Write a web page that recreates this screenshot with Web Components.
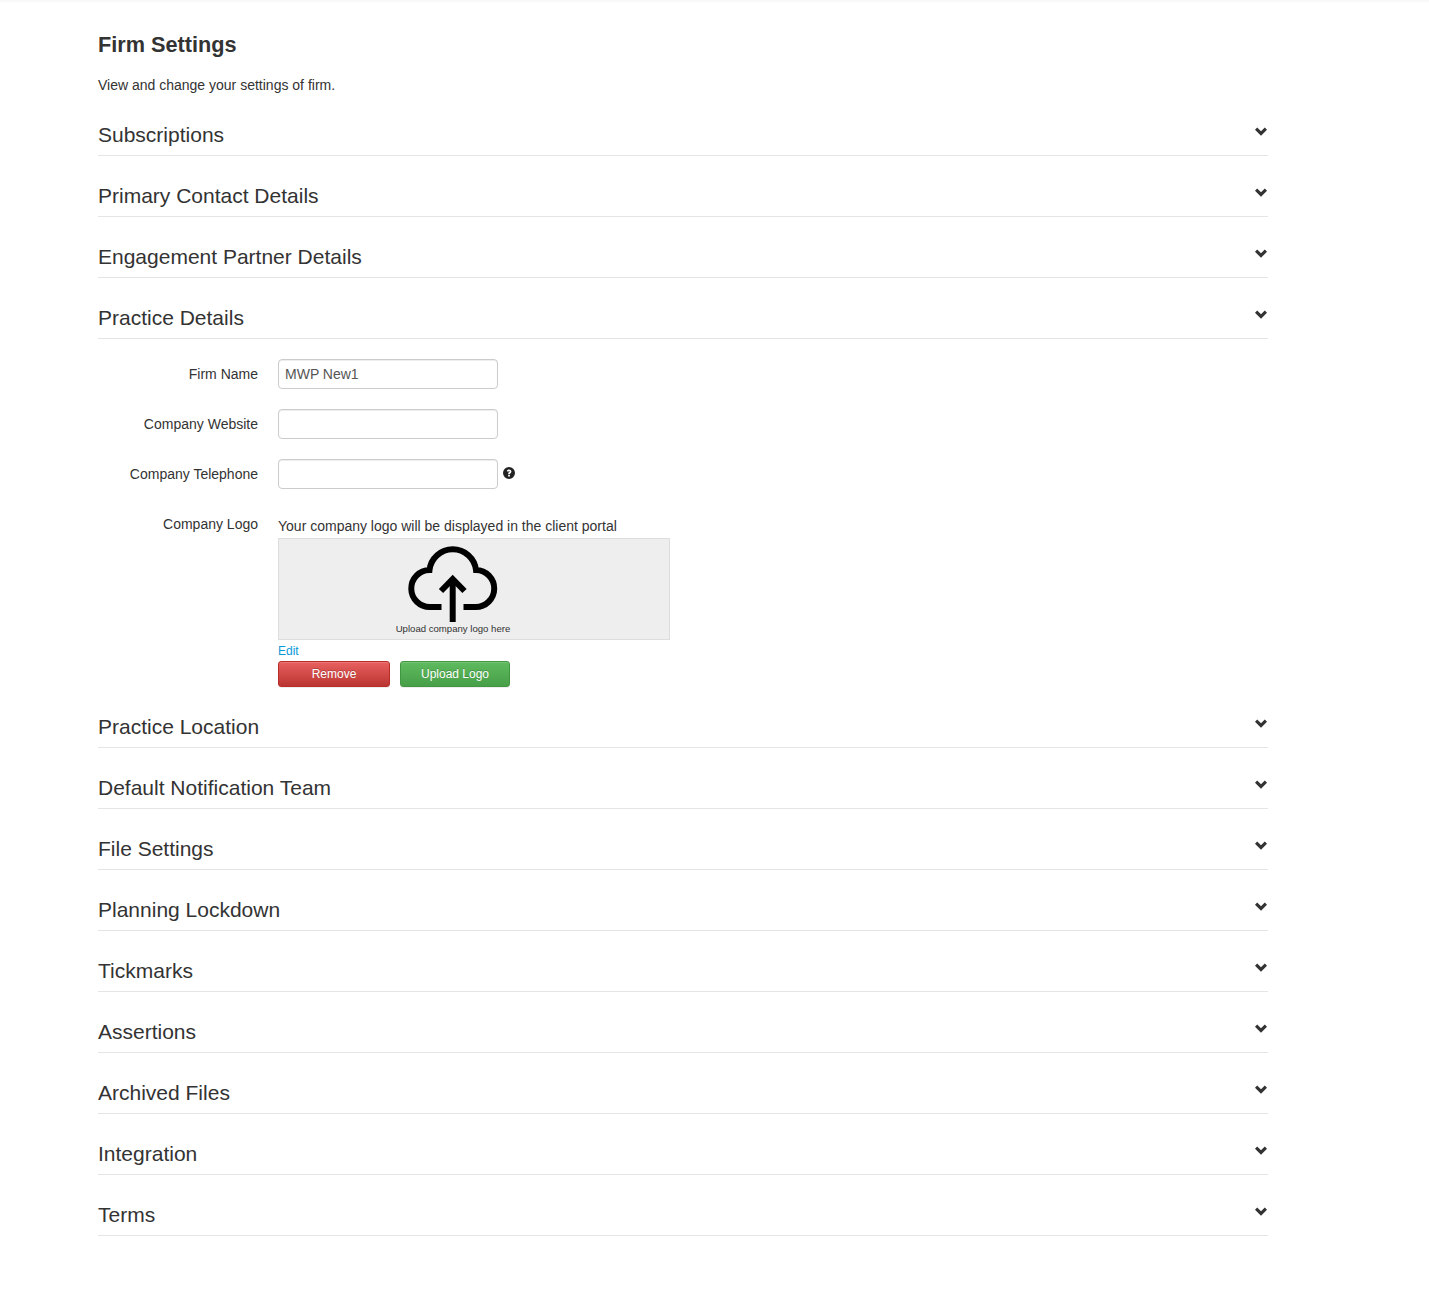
<!DOCTYPE html>
<html lang="en">
<head>
<meta charset="utf-8">
<title>Firm Settings</title>
<style>
    html, body {
        margin: 0;
        background: #fff;
        color: #333;
        font-family: "Liberation Sans", Arial, sans-serif;
    }
</style>
</head>
<body>

<firm-settings-page heading="Firm Settings" intro="View and change your settings of firm.">
    <settings-section label="Subscriptions"></settings-section>
    <settings-section label="Primary Contact Details"></settings-section>
    <settings-section label="Engagement Partner Details"></settings-section>
    <settings-section label="Practice Details">
        <form-row label="Firm Name"><text-field value="MWP New1"></text-field></form-row>
        <form-row label="Company Website"><text-field></text-field></form-row>
        <form-row label="Company Telephone"><text-field help></text-field></form-row>
        <form-row label="Company Logo" logo><logo-upload></logo-upload></form-row>
    </settings-section>
    <settings-section label="Practice Location"></settings-section>
    <settings-section label="Default Notification Team"></settings-section>
    <settings-section label="File Settings"></settings-section>
    <settings-section label="Planning Lockdown"></settings-section>
    <settings-section label="Tickmarks"></settings-section>
    <settings-section label="Assertions"></settings-section>
    <settings-section label="Archived Files"></settings-section>
    <settings-section label="Integration"></settings-section>
    <settings-section label="Terms"></settings-section>
</firm-settings-page>

<script>
const pageTemplate = document.createElement('template');
pageTemplate.innerHTML = `
    <style>
        :host {
            display: block;
            height: 1304px;
            box-sizing: border-box;
            padding: 34px 0 0 98px;
            background: linear-gradient(#f6f6f6, #fff 3px);
        }
        .wrap { width: 1170px; }
        h3 {
            margin: 0 0 19px;
            font-size: 21.7px;
            line-height: 22px;
            font-weight: bold;
            color: #333;
        }
        p {
            margin: 0;
            font-size: 14px;
            line-height: 20px;
        }
    </style>
    <div class="wrap">
        <h3></h3>
        <p></p>
        <slot></slot>
    </div>
`;

class FirmSettingsPage extends HTMLElement {
    constructor() {
        super();
        const root = this.attachShadow({mode: 'open'});
        root.appendChild(pageTemplate.content.cloneNode(true));
        root.querySelector('h3').textContent = this.getAttribute('heading');
        root.querySelector('p').textContent = this.getAttribute('intro');
    }
}

const sectionTemplate = document.createElement('template');
sectionTemplate.innerHTML = `
    <style>
        :host { display: block; }
        .head {
            display: flex;
            justify-content: space-between;
            align-items: flex-start;
            height: 31px;
            padding: 29px 1.5px 0 0;
            border-bottom: 1px solid #e5e5e5;
            font-size: 21px;
            line-height: 22px;
            color: #333;
        }
        svg { display: block; margin-top: 3px; fill: #333; }
        .body { display: none; padding-top: 20px; }
        .body.open { display: flex; flex-direction: column; gap: 20px; }
    </style>
    <div class="head">
        <span class="label"></span>
        <svg width="12" height="9" viewBox="0 0 12 9"><polygon points="0,2.700 2.200,.5 6,4.200 9.800,.5 12,2.700 6,8.800"/></svg>
    </div>
    <div class="body"><slot></slot></div>
`;

class SettingsSection extends HTMLElement {
    constructor() {
        super();
        const root = this.attachShadow({mode: 'open'});
        root.appendChild(sectionTemplate.content.cloneNode(true));
        root.querySelector('.label').textContent = this.getAttribute('label');
        if (this.children.length) root.querySelector('.body').classList.add('open');
    }
}

const rowTemplate = document.createElement('template');
rowTemplate.innerHTML = `
    <style>
        :host {
            display: grid;
            grid-template-columns: 160px 1fr;
            column-gap: 20px;
            font-size: 14px;
            line-height: 20px;
        }
        label { text-align: right; padding-top: 5px; color: #333; }
    </style>
    <label></label>
    <div><slot></slot></div>
`;

class FormRow extends HTMLElement {
    constructor() {
        super();
        const root = this.attachShadow({mode: 'open'});
        root.appendChild(rowTemplate.content.cloneNode(true));
        root.querySelector('label').textContent = this.getAttribute('label');
    }
}

const fieldTemplate = document.createElement('template');
fieldTemplate.innerHTML = `
    <style>
        :host { display: flex; align-items: flex-start; gap: 5px; }
        input {
            width: 220px;
            height: 30px;
            box-sizing: border-box;
            margin: 0;
            padding: 0 6px;
            border: 1px solid #ccc;
            border-radius: 4px;
            box-shadow: inset 0 1px 1px rgba(0,0,0,0.075);
            font: 14px "Liberation Sans", Arial, sans-serif;
            color: #555;
            outline: none;
        }
        svg { display: none; margin-top: 8px; fill: #222; }
        :host([help]) svg { display: block; }
    </style>
    <input type="text">
    <svg width="12" height="12" viewBox="0 0 12 12">
        <path fill-rule="evenodd" d="M6 0a6 6 0 1 1 0 12A6 6 0 0 1 6 0zM5.100 8v1.600h1.800V8zM6 2.500C4.800 2.500 4 3.100 3.800 4.300l1.500.4c.1-.6.300-.8.700-.8s.6.2.6.5c0 .3-.2.500-.6.800C5.400 5.700 5.100 6.100 5.100 7.300h1.800c0-.6.200-.8.600-1.100.500-.4.900-.9.900-1.700 0-1.300-1-2-2.400-2z"/>
    </svg>
`;

class TextField extends HTMLElement {
    constructor() {
        super();
        const root = this.attachShadow({mode: 'open'});
        root.appendChild(fieldTemplate.content.cloneNode(true));
        root.querySelector('input').value = this.getAttribute('value') || '';
    }
}

const logoTemplate = document.createElement('template');
logoTemplate.innerHTML = `
    <style>
        :host { display: block; padding-top: 7px; font-size: 14px; }
        .hint { line-height: 20px; height: 22px; margin-top: 0; color: #333; }
        .box {
            width: 392px;
            height: 102px;
            box-sizing: border-box;
            padding: 6px 0 0 109px;
            border: 1px solid #ddd;
            background: #eee;
        }
        .art {
            display: flex;
            flex-direction: column;
            align-items: center;
            width: 130px;
        }
        svg { display: block; }
        .caption {
            font-size: 9.6px;
            line-height: 10px;
            margin-top: 1px;
            color: #333;
            white-space: nowrap;
        }
        a {
            display: block;
            color: #0a9ad8;
            font-size: 12px;
            line-height: 14px;
            margin-top: 4px;
            text-decoration: none;
        }
        .actions { display: flex; gap: 10px; margin-top: 3px; }
    </style>
    <div class="hint">Your company logo will be displayed in the client portal</div>
    <div class="box">
        <div class="art">
            <svg width="96" height="78" viewBox="405 545 96 78" fill="none" stroke="#000" stroke-width="6">
                <path d="M441.500 607H430A18.500 18.500 0 0 1 429.500 570A23.400 23.400 0 0 1 476 570A18.500 18.500 0 0 1 475.500 607H463.500"/>
                <path d="M441 591L452.700 579L464.500 591"/>
                <path d="M452.700 580V622"/>
            </svg>
            <span class="caption">Upload company logo here</span>
        </div>
    </div>
    <a href="#">Edit</a>
    <div class="actions">
        <app-button kind="danger" style="width:112px">Remove</app-button>
        <app-button kind="success" style="width:110px">Upload Logo</app-button>
    </div>
`;

class LogoUpload extends HTMLElement {
    constructor() {
        super();
        this.attachShadow({mode: 'open'}).appendChild(logoTemplate.content.cloneNode(true));
    }
}

const buttonTemplate = document.createElement('template');
buttonTemplate.innerHTML = `
    <style>
        :host { display: block; }
        button {
            display: block;
            width: 100%;
            height: 26px;
            margin: 0;
            padding: 0;
            border-radius: 3px;
            border: 1px solid;
            color: #fff;
            font: 12px "Liberation Sans", Arial, sans-serif;
            text-shadow: 0 -1px 0 rgba(0,0,0,0.2);
            box-shadow: inset 0 1px 0 rgba(255,255,255,0.15), 0 1px 1px rgba(0,0,0,0.075);
        }
        :host([kind=danger]) button {
            background: linear-gradient(#e8605f, #ba3532);
            border-color: #b92c28;
        }
        :host([kind=success]) button {
            background: linear-gradient(#5fbb5f, #479f47);
            border-color: #419641;
        }
    </style>
    <button type="button"><slot></slot></button>
`;

class AppButton extends HTMLElement {
    constructor() {
        super();
        this.attachShadow({mode: 'open'}).appendChild(buttonTemplate.content.cloneNode(true));
    }
}

customElements.define('firm-settings-page', FirmSettingsPage);
customElements.define('settings-section', SettingsSection);
customElements.define('form-row', FormRow);
customElements.define('text-field', TextField);
customElements.define('logo-upload', LogoUpload);
customElements.define('app-button', AppButton);
</script>
</body>
</html>
